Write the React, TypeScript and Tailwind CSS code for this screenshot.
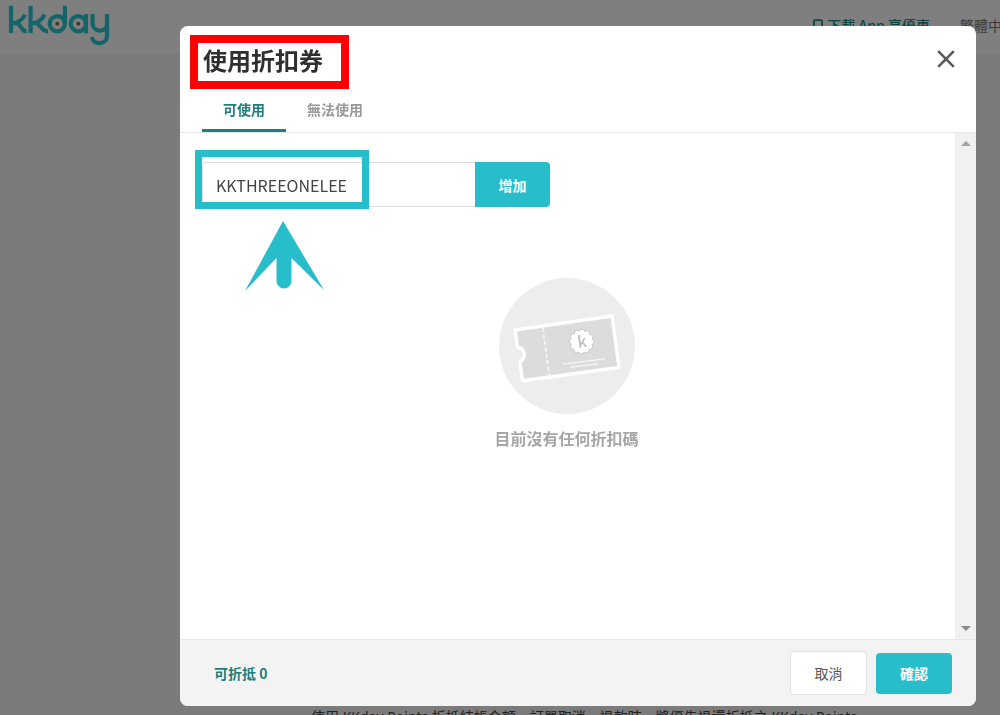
import { useState } from 'react';
import { Smartphone } from 'lucide-react';

const TABS = [
  { id: 'available', label: '可使用' },
  { id: 'unavailable', label: '無法使用' },
];

function Logo() {
  return (
    <svg viewBox="0 0 104 42" className="w-[104px] h-[42px]" fill="none" stroke="#2bc8d0" strokeWidth="4.2" aria-label="kkday" role="img">
      <path d="M4 .8V28M18 9.6C16 14 11 18.4 5 18.4M9 17.8C14 19 14 26.4 19.5 26.4" />
      <path d="M23.600 .8V28M37.600 9.6C35.600 14 30.600 18.4 24.600 18.4M28.600 17.8C33.600 19 34.600 26.4 41 26.400" />
      <circle cx="50.300" cy="18.700" r="7.600" />
      <path d="M57.900 .8V19" />
      <circle cx="71.300" cy="18.700" r="7.600" />
      <path d="M79 9V28.400" />
      <path d="M85.600 9V18.600a7.400 7.400 0 0 0 14.600 1.400M100 9V30.400c0 10-14.200 10.200-15 1.600" />
      <circle cx="50.300" cy="18.700" r="1.900" fill="#8a6a4a" stroke="none" />
      <circle cx="71.300" cy="18.700" r="1.900" fill="#8a6a4a" stroke="none" />
    </svg>
  );
}

function TicketArt() {
  return (
    <svg viewBox="0 0 136 136" className="w-[136px] h-[136px]" aria-hidden="true">
      <circle cx="68" cy="68" r="68" fill="#ededed" />
      <path
        d="M16 52L113 38L120 89.5L23.500 102.700L20.900 83.500C28 81 26 68.500 18.500 69.500Z"
        fill="#dcdcdc"
        stroke="#fff"
        strokeWidth="3.4"
        strokeLinejoin="round"
      />
      <path d="M43.800 50L50.300 97.500" stroke="#f7f7f7" strokeWidth="1.6" strokeDasharray="4 2.500" />
      {/* Scalloped seal: a ring of small discs under a larger one */}
      <circle cx="82.700" cy="63.700" r="10.200" fill="none" stroke="#cbcbcb" strokeWidth="5.600" strokeLinecap="round" strokeDasharray=".01 5.330" />
      <circle cx="82.700" cy="63.700" r="11.400" fill="#cbcbcb" />
      <circle cx="82.700" cy="63.700" r="10" fill="#fff" stroke="#fff" strokeWidth="1" />
      <circle cx="82.700" cy="63.700" r="9.600" fill="none" stroke="#fff" strokeWidth="4.600" strokeLinecap="round" strokeDasharray=".01 5.017" />
      <text x="83" y="69.500" textAnchor="middle" fontSize="16" fontWeight="500" fill="#bdbdbd" fontFamily="'Noto Sans CJK TC', sans-serif" transform="rotate(-8 82.700 63.700)">k</text>
      <path d="M63.700 86.200L106 80.800M71 89.400L99.300 85.800" stroke="#f7f7f7" strokeWidth="1.200" />
    </svg>
  );
}

function PageBehind() {
  return (
    <div className="flex flex-col h-screen overflow-hidden bg-[#f6f6f6]">
      <header className="flex justify-between h-[55px] pl-[7px] bg-white border-b border-[#eee]">
        <a href="/" className="mt-[5px]"><Logo /></a>
        <nav className="flex gap-[30px] -mr-4 mt-[15px] text-sm whitespace-nowrap">
          <a href="/app" className="flex items-start gap-0.5 text-[#1a8a85] font-medium">
            <Smartphone className="w-[14px] h-[14px] mt-1" strokeWidth={3} />
            下載 App 享優惠
          </a>
          <a href="/lang" className="text-[#777]">繁體中文</a>
        </nav>
      </header>
      <main className="flex flex-1 flex-col justify-end pl-[203px] pr-12">
        <p className="pl-[108px] -mb-3 font-['Noto_Sans','Noto_Sans_CJK_TC',sans-serif] text-sm text-[#444] whitespace-nowrap">
          使用 KKday Points 折抵結帳金額，訂單取消、退款時，將優先退還折抵之 KKday Points
        </p>
      </main>
    </div>
  );
}

export default function App() {
  const [tab, setTab] = useState('available');
  const [code, setCode] = useState('KKTHREEONELEE');

  return (
    <div className="font-['Noto_Sans_CJK_TC',sans-serif]">
      <PageBehind />

      <div className="fixed inset-0 flex bg-black/50 pt-[26px] pb-[9px] pl-[180px] pr-6">
        <section role="dialog" aria-labelledby="dialog-title" className="flex flex-1 min-w-0 flex-col overflow-hidden rounded-lg bg-white">
          <div className="flex items-start justify-between pt-[9px] pl-[10px] pr-[21px]">
            <h1 id="dialog-title" className="border-8 border-[#fe0000] pl-[5px] pr-[18px] pb-1 text-2xl leading-[34px] font-bold text-[#2f2f2f]">
              使用折扣券
            </h1>
            <button aria-label="關閉" className="mt-[15px] cursor-pointer">
              <svg viewBox="0 0 18 18" className="w-[18px] h-[18px]" stroke="#5a5a5a" strokeWidth="2.600">
                <path d="M1.200 1.200L16.800 16.800M16.800 1.200L1.200 16.800" />
              </svg>
            </button>
          </div>

          {/* Tabs */}
          <div role="tablist" className="flex pl-[22px] border-b border-[#e8e8e8]">
            {TABS.map(({ id, label }) => (
              <button
                key={id}
                role="tab"
                aria-selected={tab === id}
                onClick={() => setTab(id)}
                className={`h-[43px] px-[21px] text-sm font-bold border-b-3 cursor-pointer ${
                  tab === id ? 'text-[#1c7f7c] border-[#1c7f7c]' : 'text-[#999] border-transparent'
                }`}
              >
                {label}
              </button>
            ))}
          </div>

          <div className="flex flex-1 min-h-0">
            <div className="flex-1 min-w-0 pt-[29px] pl-[22px]">
              <form className="relative flex h-[45px]" onSubmit={e => e.preventDefault()}>
                <input
                  aria-label="折扣碼"
                  value={code}
                  onChange={e => setCode(e.target.value)}
                  className="w-[273px] border border-r-0 border-[#ddd] rounded-l pl-[13px] text-base text-[#444] outline-none"
                />
                <button type="submit" className="w-[75px] rounded-r bg-[#27bdca] text-sm font-bold text-white cursor-pointer">增加</button>

                {/* Highlight frame and arrow over the code field */}
                <div className="absolute -left-[7px] -top-3 w-[174px] h-[59px] border-7 border-[#27bdca] pointer-events-none" />
                <svg viewBox="0 0 80 70" className="absolute left-[43px] top-[59px] w-20 h-[70px]" fill="#27bdca" aria-hidden="true">
                  <path d="M38 0L79 69L46.500 37V60a7.500 7.500 0 0 1-15 0V37L0 70Z" />
                </svg>
              </form>

              <div className="flex flex-col items-center gap-[10px] mt-[71px] -ml-6">
                <TicketArt />
                <p className="text-base leading-7 font-bold text-[#a6a6a6]">目前沒有任何折扣碼</p>
              </div>
            </div>

            {/* Scroll track */}
            <div className="flex flex-col justify-between items-center w-[21px] py-2 bg-[#f1f1f1]" aria-hidden="true">
              <svg viewBox="0 0 10 5" className="w-[10px] h-[5px]" fill="#a3a3a3"><path d="M0 5L5 0L10 5Z" /></svg>
              <svg viewBox="0 0 10 5" className="w-[10px] h-[5px]" fill="#8a8a8a"><path d="M0 0L5 5L10 0Z" /></svg>
            </div>
          </div>

          <footer className="flex items-center justify-between h-[67px] pl-[34px] pr-6 border-t border-[#e8e8e8] bg-[#f3f3f3]">
            <span className="text-sm font-bold text-[#1c7f7c]">可折抵 0</span>
            <div className="flex items-center gap-[9px]">
              <button className="w-[77px] h-11 rounded border border-[#e2e2e2] bg-white text-sm text-[#555] cursor-pointer">取消</button>
              <button className="w-[76px] h-[41px] rounded bg-[#27bdca] text-sm font-bold text-white cursor-pointer">確認</button>
            </div>
          </footer>
        </section>
      </div>
    </div>
  );
}
